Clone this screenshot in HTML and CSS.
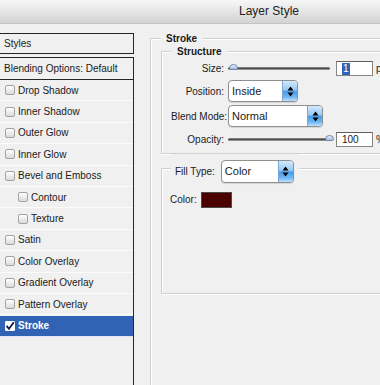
FILE: index.html
```html
<!DOCTYPE html>
<html lang="en">
<head>
<meta charset="UTF-8">
<meta name="viewport" content="width=device-width, initial-scale=1.0">
<title>Layer Style</title>
<link rel="stylesheet" href="styles.css">
</head>
<body>
  <div class="dialog">
    <div class="titlebar">Layer Style</div>
    <div class="main">
      <div class="sidebar">
        <div class="side-head">Styles</div>
        <div class="side-head side-blend">Blending Options: Default</div>
        <ul class="effects">
          <li><span class="check"></span>Drop Shadow</li>
          <li><span class="check"></span>Inner Shadow</li>
          <li><span class="check"></span>Outer Glow</li>
          <li><span class="check"></span>Inner Glow</li>
          <li><span class="check"></span>Bevel and Emboss</li>
          <li class="sub"><span class="check"></span>Contour</li>
          <li class="sub"><span class="check"></span>Texture</li>
          <li><span class="check"></span>Satin</li>
          <li><span class="check"></span>Color Overlay</li>
          <li><span class="check"></span>Gradient Overlay</li>
          <li><span class="check"></span>Pattern Overlay</li>
          <li class="selected">
            <span class="check on">
              <svg width="10" height="10" viewBox="0 0 10 10"><path d="M1.5 4.8 L4 7.8 L8.8 1.2" fill="none" stroke="#0d1f4a" stroke-width="1.8"/></svg>
            </span>Stroke
          </li>
        </ul>
      </div>

      <div class="pane">
        <fieldset class="group outer">
          <legend>Stroke</legend>

          <fieldset class="group structure">
            <legend>Structure</legend>

            <div class="row row-size">
              <span class="lbl">Size:</span>
              <div class="slider"><span class="thumb"></span></div>
              <span class="num"><span class="sel">1</span></span>
              <span class="unit">px</span>
            </div>

            <div class="row row-select">
              <span class="lbl">Position:</span>
              <div class="select select-pos">
                <span class="select-text">Inside</span>
                <span class="select-btn">
                  <svg width="7" height="11" viewBox="0 0 7 11"><path d="M3.5 0.5 L6.5 4.5 L0.5 4.5 Z M3.5 10.5 L6.5 6.5 L0.5 6.5 Z" fill="#000"/></svg>
                </span>
              </div>
            </div>

            <div class="row row-select row-blend">
              <span class="lbl">Blend Mode:</span>
              <div class="select select-blend">
                <span class="select-text">Normal</span>
                <span class="select-btn">
                  <svg width="7" height="11" viewBox="0 0 7 11"><path d="M3.5 0.5 L6.5 4.5 L0.5 4.5 Z M3.5 10.5 L6.5 6.5 L0.5 6.5 Z" fill="#000"/></svg>
                </span>
              </div>
            </div>

            <div class="row row-opacity">
              <span class="lbl">Opacity:</span>
              <div class="slider"><span class="thumb thumb-end"></span></div>
              <span class="num">100</span>
              <span class="unit">%</span>
            </div>
          </fieldset>

          <fieldset class="group fill">
            <legend>
              <span class="fill-label">Fill Type:</span>
              <div class="select select-fill">
                <span class="select-text">Color</span>
                <span class="select-btn">
                  <svg width="7" height="11" viewBox="0 0 7 11"><path d="M3.5 0.5 L6.5 4.5 L0.5 4.5 Z M3.5 10.5 L6.5 6.5 L0.5 6.5 Z" fill="#000"/></svg>
                </span>
              </div>
            </legend>
            <div class="fill-body">
              <div class="color-row">
                <span>Color:</span>
                <span class="swatch"></span>
              </div>
            </div>
          </fieldset>
        </fieldset>
      </div>
    </div>
  </div>
</body>
</html>
```

FILE: styles.css
```css
html, body {
  margin: 0;
  padding: 0;
  overflow: hidden;
}
body {
  font-family: "Liberation Sans", Arial, sans-serif;
  font-size: 10px;
  color: #1a1a1a;
  background-color: #f0f0f0;
}
.dialog {
  width: 538px;
  height: 385px;
  overflow: hidden;
}
.titlebar {
  height: 23px;
  line-height: 23px;
  text-align: center;
  font-size: 12px;
  color: #222222;
  background: linear-gradient(#f7f7f7, #d3d3d3);
  border-bottom: 1px solid #c4c4c4;
}
.main {
  display: flex;
  height: 420px;
}

/* left list of effects */
.sidebar {
  width: 134px;
  display: flex;
  flex-direction: column;
  padding-top: 9px;
}
.side-head {
  box-sizing: border-box;
  height: 21px;
  display: flex;
  align-items: center;
  padding-left: 4px;
  border: 1px solid #262626;
  border-left: 0;
}
.side-blend {
  height: 22px;
  margin-top: 3px;
  border-bottom: 0;
}
.effects {
  flex: 1;
  list-style: none;
  margin: 0;
  padding: 0;
  border-top: 1px solid #262626;
  border-right: 1px solid #262626;
}
.effects li {
  box-sizing: border-box;
  height: 21.4px;
  display: flex;
  align-items: center;
  border-bottom: 1px solid #fbfbfb;
}
.check {
  box-sizing: border-box;
  width: 10px;
  height: 10px;
  margin: 0 3px 0 5px;
  border: 1px solid #a3a3a3;
  border-radius: 2px;
  background: linear-gradient(#ffffff, #dadada);
}
.effects li.sub .check {
  margin-left: 18px;
}
.effects li.selected {
  background-color: #3163b5;
  color: #ffffff;
  font-weight: bold;
  border-top: 1px solid #f0f0f0;
  border-bottom: 1px solid #dfe6f1;
}
.check.on {
  background: #ffffff;
  border-color: #ffffff;
  border-radius: 1px;
  position: relative;
}
.check.on svg {
  position: absolute;
  left: -1px;
  top: -1px;
}

/* right side */
.pane {
  flex: 1;
  padding: 8px 12px 0 16px;
}
.group {
  margin: 0;
  min-width: 0;
  border: 1px solid #d0d0d0;
  box-shadow: inset 1px 1px 0 #ffffff, 0 1px 0 #ffffff;
}
.group legend {
  font-weight: bold;
  line-height: 13px;
  background-color: #f0f0f0;
}
.outer {
  height: 420px;
  padding: 0 0 0 10px;
}
.outer > legend {
  padding: 0 5px;
}
.structure {
  margin-right: 10px;
  padding: 3px 0 6px 9px;
}
.structure > legend {
  padding: 0 6px;
}
.row {
  display: flex;
  align-items: center;
  height: 15px;
}
.row-select {
  height: 22px;
  margin-top: 4px;
}
.row-blend {
  margin-top: 3px;
}
.row-opacity {
  margin-top: 5px;
}
.lbl {
  width: 53px;
  margin-right: 4px;
  text-align: right;
  white-space: nowrap;
}
.slider {
  position: relative;
  width: 102px;
  height: 3px;
  border-radius: 2px;
  background: linear-gradient(#9a9a9a, #4a4a4a 50%, #b5b5b5);
}
.thumb {
  position: absolute;
  left: 1px;
  top: -3px;
  box-sizing: border-box;
  width: 9px;
  height: 6px;
  border: 1px solid #6f88ab;
  border-radius: 5px 5px 2px 2px;
  background: linear-gradient(#eef4fb, #9cb9dc);
}
.thumb-end {
  left: auto;
  right: -4px;
}
.num {
  box-sizing: border-box;
  width: 37px;
  height: 15px;
  margin-left: 6px;
  padding-left: 5px;
  display: flex;
  align-items: center;
  background-color: #ffffff;
  border: 1px solid #858585;
  border-top-color: #5e5e5e;
}
.sel {
  background-color: #3163b5;
  color: #ffffff;
  padding: 0 1px;
  line-height: 12px;
}
.unit {
  margin-left: 3px;
}

/* popup menus */
.select {
  box-sizing: border-box;
  height: 22px;
  display: flex;
  border: 1px solid #8f8f8f;
  border-radius: 4px;
  background-color: #ffffff;
  box-shadow: 0 1px 1px rgba(0, 0, 0, 0.12);
  overflow: hidden;
}
.select-pos {
  width: 70px;
}
.select-blend {
  width: 95px;
}
.select-fill {
  width: 73px;
  height: 23px;
}
.select-text {
  flex: 1;
  display: flex;
  align-items: center;
  padding-left: 3px;
  font-weight: normal;
  font-size: 11px;
}
.select-btn {
  width: 14px;
  display: flex;
  align-items: center;
  justify-content: center;
  border-left: 1px solid #7aa6d6;
  background: linear-gradient(#d4e9fc 0%, #97c9f5 45%, #4b9be8 52%, #6eb6f4 80%, #c0e1fc 100%);
}

/* fill type box */
.fill {
  margin-right: 10px;
  padding: 0 0 0 9px;
}
.fill > legend {
  display: flex;
  align-items: center;
  padding: 6px 5px 0 4px;
  font-weight: normal;
}
.fill-label {
  margin-right: 6px;
}
.fill-body {
  height: 110px;
  box-sizing: border-box;
  padding-top: 9px;
}
.color-row {
  display: flex;
  align-items: center;
  height: 15px;
  margin-left: -1px;
}
.swatch {
  box-sizing: border-box;
  width: 31px;
  height: 16px;
  margin-left: 4px;
  background-color: #4b0000;
  border: 1px solid #4a4a4a;
}
```
